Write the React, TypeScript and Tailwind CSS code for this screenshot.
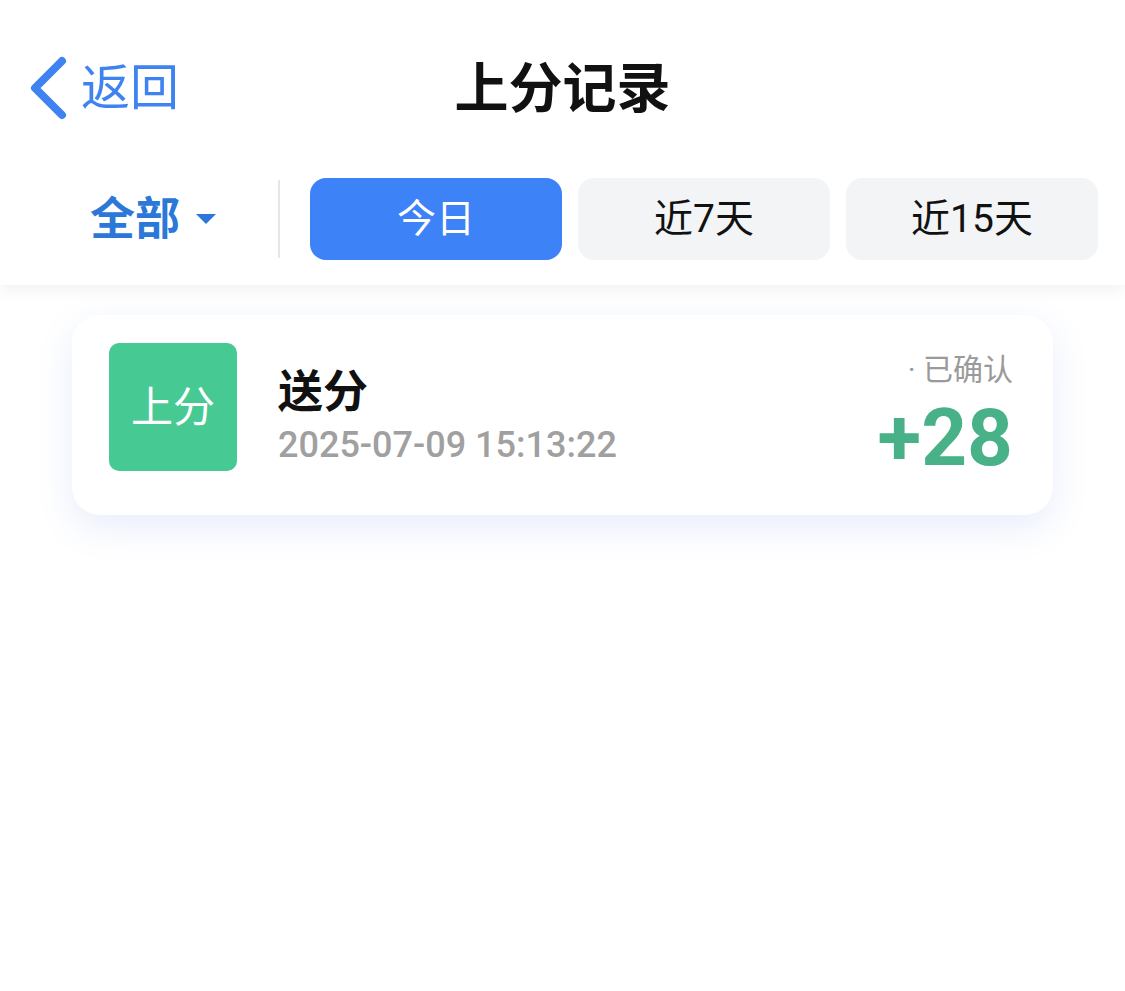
const tabs = ['今日', '近7天', '近15天'];

export default function App() {
  const active = 0;

  return (
    <div className="min-h-screen bg-white font-['Roboto','Noto_Sans_CJK_SC',sans-serif]">
      {/* header */}
      <div className="relative z-10 bg-white shadow-[0_6px_14px_rgba(0,0,0,0.05)]">
        <div className="grid h-[176px] grid-cols-[1fr_auto_1fr] items-center">
          <button className="flex items-center gap-[13px] pl-[28px] text-[#3f83f0]">
            <svg width="40" height="64" viewBox="0 0 40 64" fill="none">
              <polyline points="34,5 7,32 34,59" stroke="currentColor" strokeWidth="8" strokeLinecap="round" strokeLinejoin="round" />
            </svg>
            <span className="text-[49px] leading-none">返回</span>
          </button>
          <h1 className="pt-[3px] text-[54px] font-bold leading-none text-[#111]">上分记录</h1>
          <div />
        </div>

        <div className="flex items-center pb-[25px] pt-[2px]">
          <div className="flex w-[278px] items-center justify-center gap-[16px] pl-[28px]">
            <span className="text-[45px] font-bold leading-none text-[#2b78d8]">全部</span>
            <svg width="20" height="10" viewBox="0 0 20 10">
              <polygon points="0,0 20,0 10,10" fill="#2b78d8" />
            </svg>
          </div>
          <div className="h-[78px] w-[2px] bg-[#e6e6e6]" />
          <div className="ml-[30px] flex gap-[16px]">
            {tabs.map((t, i) => (
              <button
                key={t}
                className={
                  i === active
                    ? 'flex h-[82px] w-[252px] items-center justify-center rounded-[16px] bg-[#3d82f7] text-[39px] text-white'
                    : 'flex h-[82px] w-[252px] items-center justify-center rounded-[16px] bg-[#f3f4f6] text-[39px] text-[#111]'
                }
              >
                {t}
              </button>
            ))}
          </div>
        </div>
      </div>

      {/* list */}
      <div className="px-[72px] pt-[30px]">
        <div className="flex items-start rounded-[28px] bg-white pb-[37px] pl-[37px] pr-[40px] pt-[28px] shadow-[0_12px_36px_rgba(90,130,230,0.14)]">
          <div className="flex h-[128px] w-[128px] shrink-0 items-center justify-center rounded-[10px] bg-[#47c993] text-[42px] text-white">
            上分
          </div>
          <div className="ml-[41px] mt-[23px] flex flex-1 flex-col gap-[4px]">
            <div className="text-[45px] font-bold leading-[1.2] text-[#111]">送分</div>
            <div className="text-[36px] font-medium leading-[1.2] text-[#a0a0a0]">2025-07-09 15:13:22</div>
          </div>
          <div className="mt-[9px] flex flex-col items-end gap-[10px]">
            <div className="text-[30px] leading-[1.2] text-[#9a9a9a]">· 已确认</div>
            <div className="text-[80px] font-bold leading-none text-[#48b188]">+28</div>
          </div>
        </div>
      </div>
    </div>
  );
}
